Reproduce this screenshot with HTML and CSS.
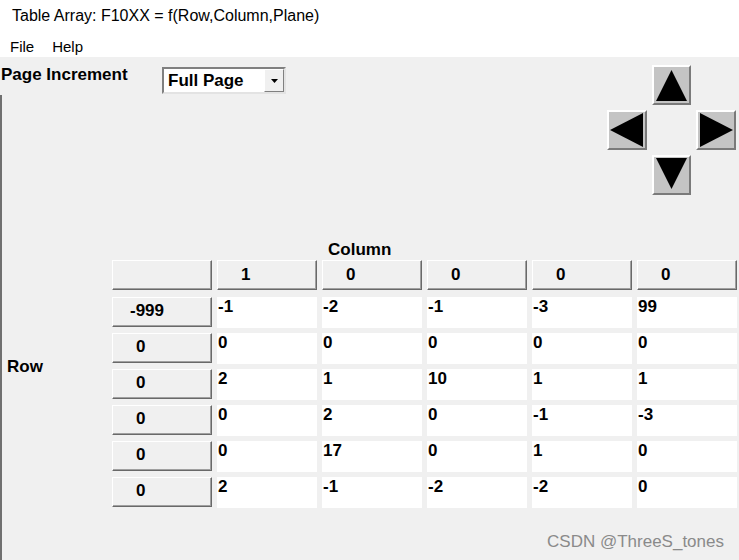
FILE: index.html
```html
<!DOCTYPE html>
<html>
<head>
<meta charset="utf-8">
<link rel="stylesheet" href="styles.css">
</head>
<body>
<div class="window">
  <div class="titlebar">Table Array: F10XX = f(Row,Column,Plane)</div>
  <div class="menubar"><span class="menu-item">File</span><span class="menu-item">Help</span></div>
  <div class="client">
    <div class="top">
      <div class="page-label">Page Increment</div>
      <div class="select">
        <span class="select-value">Full Page</span>
        <span class="select-btn"><svg width="7" height="4" viewBox="0 0 7 4"><polygon points="0,0 7,0 3.5,4" fill="#000"/></svg></span>
      </div>
      <div class="arrows">
        <div class="arrow up"><svg viewBox="0 0 35 36" width="35" height="36"><polygon points="17.5,3 2,34 33,34" fill="#000"/></svg></div>
        <div class="arrow left"><svg viewBox="0 0 36 36" width="36" height="36"><polygon points="1,18 34,1 34,35" fill="#000"/></svg></div>
        <div class="arrow right"><svg viewBox="0 0 36 36" width="36" height="36"><polygon points="35,18 2,1 2,35" fill="#000"/></svg></div>
        <div class="arrow down"><svg viewBox="0 0 35 36" width="35" height="36"><polygon points="2,1 33,1 17.5,32" fill="#000"/></svg></div>
      </div>
    </div>
    <div class="col-label">Column</div>
    <div class="table">
      <div class="row-label">Row</div>
      <div class="btn hbtn corner"></div>
      <div class="btn hbtn">1</div>
      <div class="btn hbtn">0</div>
      <div class="btn hbtn">0</div>
      <div class="btn hbtn">0</div>
      <div class="btn hbtn">0</div>

      <div class="btn rbtn wide">-999</div>
      <div class="cell">-1</div><div class="cell">-2</div><div class="cell">-1</div><div class="cell">-3</div><div class="cell">99</div>

      <div class="btn rbtn">0</div>
      <div class="cell">0</div><div class="cell">0</div><div class="cell">0</div><div class="cell">0</div><div class="cell">0</div>

      <div class="btn rbtn">0</div>
      <div class="cell">2</div><div class="cell">1</div><div class="cell">10</div><div class="cell">1</div><div class="cell">1</div>

      <div class="btn rbtn">0</div>
      <div class="cell">0</div><div class="cell">2</div><div class="cell">0</div><div class="cell">-1</div><div class="cell">-3</div>

      <div class="btn rbtn">0</div>
      <div class="cell">0</div><div class="cell">17</div><div class="cell">0</div><div class="cell">1</div><div class="cell">0</div>

      <div class="btn rbtn">0</div>
      <div class="cell">2</div><div class="cell">-1</div><div class="cell">-2</div><div class="cell">-2</div><div class="cell">0</div>
    </div>
    <div class="watermark">CSDN @ThreeS_tones</div>
  </div>
</div>
</body>
</html>
```

FILE: styles.css
```css
html, body {
  margin: 0;
  padding: 0;
}
body {
  width: 739px;
  height: 560px;
  overflow: hidden;
  background: #f0f0f0;
  font-family: "Liberation Sans", Arial, sans-serif;
  color: #000;
}
.window {
  width: 739px;
  height: 560px;
  display: flex;
  flex-direction: column;
}
.titlebar {
  height: 34px;
  line-height: 32px;
  padding-left: 12px;
  background: #fff;
  font-size: 16px;
}
.menubar {
  height: 23px;
  box-sizing: border-box;
  padding-top: 2px;
  line-height: 21px;
  background: #fff;
  font-size: 15px;
  display: flex;
  gap: 18px;
  padding-left: 10px;
}
.client {
  position: relative;
  flex: 1;
  padding-top: 8px;
  background: #f0f0f0;
  font-weight: bold;
  font-size: 17px;
}
.client::before {
  content: "";
  position: absolute;
  left: 0;
  top: 38px;
  bottom: 0;
  width: 2px;
  background: #707070;
}
.top {
  display: flex;
  align-items: flex-start;
}
.page-label {
  width: 161px;
  padding-left: 1px;
  line-height: 20px;
}
.select {
  margin-top: 2px;
  width: 124px;
  height: 27px;
  box-sizing: border-box;
  border: 2px solid;
  border-color: #808080 #e3e3e3 #e3e3e3 #808080;
  background: #fff;
  display: flex;
}
.select-value {
  flex: 1;
  padding-left: 4px;
  line-height: 23px;
}
.select-btn {
  width: 20px;
  box-sizing: border-box;
  background: #f0f0f0;
  border: 1px solid;
  border-color: #fff #808080 #808080 #fff;
  display: flex;
  align-items: center;
  justify-content: center;
}
.arrows {
  margin-left: auto;
  margin-right: 3px;
  display: grid;
  grid-template-columns: 40px 39px 40px;
  grid-template-rows: 40px 40px 40px;
  gap: 5px;
}
.arrow {
  box-sizing: border-box;
  background: #c4c4c4;
  border: 2px solid;
  border-color: #fff #7a7a7a #7a7a7a #fff;
  display: flex;
  align-items: center;
  justify-content: center;
}
.arrow svg { display: block; }
.arrow.up { grid-column: 2; grid-row: 1; }
.arrow.left { grid-column: 1; grid-row: 2; }
.arrow.right { grid-column: 3; grid-row: 2; }
.arrow.down { grid-column: 2; grid-row: 3; }
.col-label {
  margin-top: 46px;
  margin-left: 328px;
  line-height: 18px;
  height: 18px;
}
.table {
  margin-top: 1px;
  display: grid;
  grid-template-columns: 107px repeat(6, 100px);
  grid-template-rows: 32px repeat(6, 31px);
  column-gap: 5px;
  row-gap: 5px;
}
.row-label {
  grid-column: 1;
  grid-row: 3 / 5;
  align-self: center;
  padding-left: 7px;
  line-height: 20px;
}
.btn {
  box-sizing: border-box;
  height: 30px;
  align-self: start;
  background: #f0f0f0;
  border: 1px solid;
  border-color: #fff #696969 #696969 #fff;
  box-shadow: inset -1px -1px 0 #a0a0a0;
  line-height: 28px;
  padding-left: 23px;
}
.corner { grid-column: 2; }
.rbtn { grid-column: 2; line-height: 26px; }
.rbtn.wide { padding-left: 17px; }
.cell {
  background: #fff;
  line-height: 20px;
  padding-left: 1px;
}
.watermark {
  position: absolute;
  right: 15px;
  bottom: 8px;
  font-weight: normal;
  font-size: 17px;
  line-height: 20px;
  color: #8a8a8a;
}
```
